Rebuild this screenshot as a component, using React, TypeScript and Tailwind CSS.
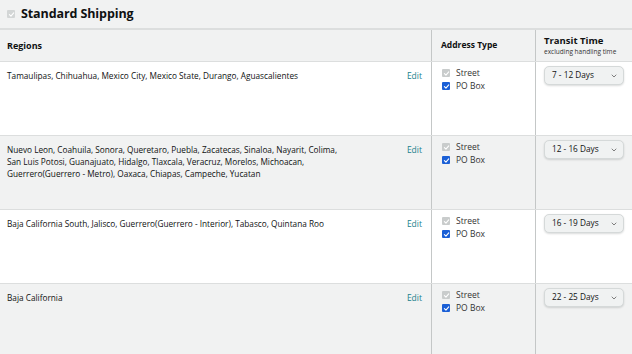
import { ChevronDown } from "lucide-react";

type Row = { regions: string; days: string };

const rows: Row[] = [
  {
    regions: "Tamaulipas, Chihuahua, Mexico City, Mexico State, Durango, Aguascalientes",
    days: "7 - 12 Days",
  },
  {
    regions:
      "Nuevo Leon, Coahuila, Sonora, Queretaro, Puebla, Zacatecas, Sinaloa, Nayarit, Colima, San Luis Potosi, Guanajuato, Hidalgo, Tlaxcala, Veracruz, Morelos, Michoacan, Guerrero(Guerrero - Metro), Oaxaca, Chiapas, Campeche, Yucatan",
    days: "12 - 16 Days",
  },
  {
    regions: "Baja California South, Jalisco, Guerrero(Guerrero - Interior), Tabasco, Quintana Roo",
    days: "16 - 19 Days",
  },
  { regions: "Baja California", days: "22 - 25 Days" },
];

const Check = ({ disabled }: { disabled?: boolean }) => (
  <span
    className={
      "flex h-[8px] w-[8px] items-center justify-center rounded-[1px] " +
      (disabled ? "bg-[#c9cccc]" : "bg-[#1a5fd6]")
    }
  >
    <svg viewBox="0 0 10 10" className="h-[7px] w-[7px]" fill="none" stroke="white" strokeWidth={1.6}>
      <path d="M2 5.2 4.2 7.3 8.2 2.8" strokeLinecap="round" strokeLinejoin="round" />
    </svg>
  </span>
);

const App = () => {
  return (
    <div className="h-[354px] w-[632px] overflow-hidden bg-white text-[#0f1111]" style={{ fontFamily: '"Open Sans", "Liberation Sans", sans-serif' }}>
      {/* Title bar */}
      <div className="flex h-[28px] items-center gap-[6px] bg-[#f1f2f2] pl-[7px]">
        <span className="flex h-[8px] w-[8px] items-center justify-center rounded-[1px] bg-[#d3d6d6]">
          <svg viewBox="0 0 10 10" className="h-[7px] w-[7px]" fill="none" stroke="white" strokeWidth={1.6}>
            <path d="M2 5.2 4.2 7.3 8.2 2.8" strokeLinecap="round" strokeLinejoin="round" />
          </svg>
        </span>
        <span className="text-[12.5px] font-bold tracking-[-0.1px]">Standard Shipping</span>
      </div>

      {/* Header */}
      <div className="grid h-[34px] grid-cols-[431px_104px_97px] border-t-[2px] border-b border-[#dcdede] bg-[#f1f2f2]">
        <div className="flex items-center pl-[7px] text-[9px] font-bold">Regions</div>
        <div className="flex items-center border-l border-[#c4c7c7] pl-[9px] text-[8.5px] font-bold">Address Type</div>
        <div className="flex flex-col justify-center border-l border-[#c4c7c7] pl-[8px]">
          <span className="text-[9.5px] font-bold leading-[13px]">Transit Time</span>
          <span className="text-[6.5px] leading-[10px] text-[#333]">excluding handling time</span>
        </div>
      </div>

      {rows.map((row, i) => (
        <div
          key={row.days}
          className={
            "grid h-[74px] grid-cols-[431px_104px_97px] border-b border-[#dcdede] " +
            (i % 2 === 1 ? "bg-[#f1f2f2]" : "bg-white")
          }
        >
          <div className="flex justify-between pl-[7px] pr-[9px] pt-[8px]">
            <p className="w-[338px] text-[8.25px] leading-[12px]">{row.regions}</p>
            <span className="text-[8.5px] leading-[12px] text-[#217f8d]">Edit</span>
          </div>
          <div className="flex flex-col gap-[1px] border-l border-[#c4c7c7] pl-[10px] pt-[5px] text-[8.5px] leading-[12px]">
            <label className="flex items-center gap-[6px]">
              <Check disabled />
              <span className="text-[#333]">Street</span>
            </label>
            <label className="flex items-center gap-[6px]">
              <Check />
              <span className="text-[#333]">PO Box</span>
            </label>
          </div>
          <div className="border-l border-[#c4c7c7] pl-[8px] pt-[4px]">
            <div className="flex h-[19px] w-[80px] items-center justify-between rounded-[5px] border border-[#d5d9d9] bg-[#f0f2f2] pl-[7px] pr-[5px] shadow-[0_1px_2px_rgba(15,17,17,0.15)]">
              <span className="text-[8.25px]">{row.days}</span>
              <ChevronDown className="h-[8px] w-[8px] text-[#666]" strokeWidth={2.5} />
            </div>
          </div>
        </div>
      ))}
    </div>
  );
};

export default App;
